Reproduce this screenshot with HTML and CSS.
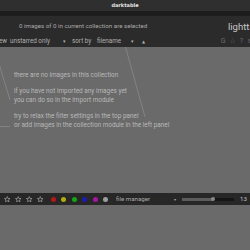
FILE: index.html
```html
<!DOCTYPE html>
<html lang="en">

<head>
  <meta charset="UTF-8" />
  <title>darktable lighttable</title>
  <link rel="stylesheet" href="styles.css">
</head>

<body>
  <div class="window">
    <div class="titlebar">darktable</div>
    <div class="toggle-top"><span class="arrow">▲</span></div>

    <div class="header">
      <div class="selection">0 images of 0 in current collection are selected</div>
      <div class="view-name">lighttable</div>
    </div>

    <div class="filters">
      <span class="cut">ew</span>
      <span class="filter rating">unstarred only</span>
      <span class="drop">▾</span>
      <span class="label">sort by</span>
      <span class="filter sort">filename</span>
      <span class="drop">▾</span>
      <span class="drop up">▲</span>
      <span class="tools">
        <span>G</span>
        <span>☆</span>
        <span>?</span>
        <span>≡</span>
      </span>
    </div>

    <div class="center">
      <svg class="hints" width="250" height="146" viewBox="0 47 250 146">
        <line x1="125.5" y1="47" x2="145" y2="117" />
        <line x1="-6" y1="47" x2="10" y2="100" />
        <line x1="0" y1="126.5" x2="10" y2="126.5" />
      </svg>
      <p class="msg first">there are no images in this collection</p>
      <p class="msg gap">if you have not imported any images yet</p>
      <p class="msg">you can do so in the import module</p>
      <p class="msg gap">try to relax the filter settings in the top panel</p>
      <p class="msg">or add images in the collection module in the left panel</p>
    </div>

    <div class="bottombar">
      <div class="stars">
        <svg viewBox="0 0 10 10"><path d="M5 .8 6.2 3.8 9.3 3.9 6.9 5.9 7.7 9 5 7.3 2.3 9 3.1 5.9.7 3.9 3.8 3.8Z" /></svg>
        <svg viewBox="0 0 10 10"><path d="M5 .8 6.2 3.8 9.3 3.9 6.9 5.9 7.7 9 5 7.3 2.3 9 3.1 5.9.7 3.9 3.8 3.8Z" /></svg>
        <svg viewBox="0 0 10 10"><path d="M5 .8 6.2 3.8 9.3 3.9 6.9 5.9 7.7 9 5 7.3 2.3 9 3.1 5.9.7 3.9 3.8 3.8Z" /></svg>
        <svg viewBox="0 0 10 10"><path d="M5 .8 6.2 3.8 9.3 3.9 6.9 5.9 7.7 9 5 7.3 2.3 9 3.1 5.9.7 3.9 3.8 3.8Z" /></svg>
      </div>
      <div class="labels">
        <span class="dot red"></span>
        <span class="dot yellow"></span>
        <span class="dot green"></span>
        <span class="dot blue"></span>
        <span class="dot purple"></span>
        <span class="dot grey"></span>
      </div>
      <span class="layout">file manager</span>
      <span class="drop">▾</span>
      <div class="zoom">
        <div class="zoom-fill"></div>
        <div class="zoom-knob"></div>
      </div>
      <span class="count">13</span>
    </div>

    <div class="below"></div>
  </div>
</body>

</html>
```

FILE: styles.css
```css
* {
  box-sizing: border-box;
}

body {
  margin: 0;
  padding: 0;
  font-family: Roboto, 'DejaVu Sans', sans-serif;
  background-color: #6a6a6a;
  color: #b4b4b4;
}

.window {
  width: 250px;
  height: 250px;
  overflow: hidden;
  display: flex;
  flex-direction: column;
}

.titlebar {
  height: 11px;
  background-color: #2f2f2f;
  color: #e6e6e6;
  font-family: 'DejaVu Sans', sans-serif;
  font-weight: bold;
  font-size: 5px;
  line-height: 11px;
  text-align: center;
}

.toggle-top {
  height: 5px;
  background-color: #1d1d1d;
  text-align: center;
  line-height: 5px;
}

.arrow {
  display: inline-block;
  font-size: 4px;
  color: #d0d0d0;
  margin-left: 2px;
}

.header {
  height: 19px;
  background-color: #2b2b2b;
  display: flex;
  align-items: center;
  white-space: nowrap;
  overflow: hidden;
}

.selection {
  flex: 1;
  padding-left: 19px;
  font-size: 6.2px;
  color: #a8a8a8;
  padding-top: 1px;
}

.view-name {
  width: 22px;
  overflow: hidden;
  font-size: 9.5px;
  color: #c8c8c8;
  padding-top: 1px;
}

.filters {
  height: 12px;
  background-color: #2b2b2b;
  display: flex;
  align-items: center;
  white-space: nowrap;
  overflow: hidden;
  font-size: 6.3px;
  color: #b0b0b0;
}

.filters > span {
  flex-shrink: 0;
  overflow: hidden;
}

.filters .cut {
  width: 11px;
  margin-left: -1px;
}

.filters .rating {
  width: 53px;
}

.filters .drop {
  width: 9px;
  font-size: 5px;
}

.filters .label {
  width: 25px;
}

.filters .sort {
  width: 34px;
}

.filters .drop.up {
  width: 6px;
  font-size: 4px;
  margin-left: 2px;
}

.tools {
  margin-left: auto;
  margin-right: -3px;
  display: flex;
  gap: 4px;
  color: #6c6c6c;
  font-size: 7px;
}

.center {
  position: relative;
  height: 146px;
  background-color: #6a6a6a;
  padding-top: 24px;
}

.hints {
  position: absolute;
  left: 0;
  top: 0;
}

.hints line {
  stroke: #8e8e8e;
  stroke-width: 0.7;
}

.msg {
  margin: 0;
  padding-left: 14px;
  font-size: 6.4px;
  line-height: 9px;
  color: #b8b8b8;
  white-space: nowrap;
}

.msg.gap {
  margin-top: 7px;
}

.bottombar {
  height: 12px;
  background-color: #272727;
  display: flex;
  align-items: center;
  white-space: nowrap;
  overflow: hidden;
  font-size: 6.2px;
  color: #a8a8a8;
}

.stars {
  display: flex;
  gap: 4.5px;
  margin-left: 4px;
}

.stars svg {
  width: 6.5px;
  height: 6.5px;
  fill: none;
  stroke: #b8b8b8;
  stroke-width: 0.9;
}

.labels {
  display: flex;
  gap: 5.5px;
  margin-left: 7px;
}

.dot {
  width: 5px;
  height: 5px;
  border-radius: 50%;
}

.red { background-color: #b41818; }
.yellow { background-color: #b0ac10; }
.green { background-color: #12a412; }
.blue { background-color: #1c1cb0; }
.purple { background-color: #a416a4; }
.grey { background-color: #9c9c9c; }

.layout {
  width: 58px;
  margin-left: 8px;
  flex-shrink: 0;
}

.bottombar .drop {
  width: 8px;
  font-size: 4px;
  flex-shrink: 0;
}

.zoom {
  position: relative;
  width: 52px;
  height: 3px;
  flex-shrink: 0;
  background-color: #161616;
}

.zoom-fill {
  width: 31px;
  height: 3px;
  background-color: #5c5c5c;
}

.zoom-knob {
  position: absolute;
  left: 29px;
  top: -0.5px;
  width: 4px;
  height: 4px;
  border-radius: 50%;
  background-color: #8a8a8a;
}

.count {
  margin-left: 6px;
  color: #c0c0c0;
}

.below {
  flex: 1;
  background-color: #6a6a6a;
}
```
